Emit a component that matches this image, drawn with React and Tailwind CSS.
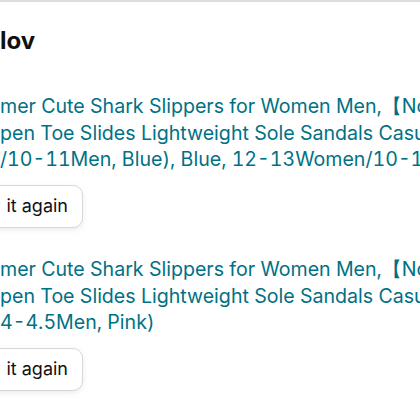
function Title({ lines }) {
  return (
    <div className="text-[#007185] text-[19.6px] leading-[26.67px] tabular-nums font-['Inter',sans-serif]">
      {lines.map((l, i) => (
        <div key={i} className="whitespace-nowrap">
          {l}
        </div>
      ))}
    </div>
  );
}

function BuyAgain() {
  return (
    <div className="mt-[12px] flex">
      <button className="-ml-[60px] flex h-[43px] w-[143px] items-center justify-end rounded-[10px] border border-[#d5d9d9] bg-white pr-[14px] pb-[2px] text-[18px] leading-[24px] text-[#0f1111] font-['Inter',sans-serif] shadow-[0_2px_5px_0_rgba(213,217,217,0.5)] whitespace-nowrap">
        <span className="mr-[6px]">Buy</span>
        <span>it again</span>
      </button>
    </div>
  );
}

export default function App() {
  return (
    <div className="w-[420px] h-[420px] overflow-hidden bg-white">
      <div className="border-t-2 border-[#dcdede]">
        <h2 className="mt-[23px] text-[24px] leading-[32px] font-bold text-[#0f1111] font-['Inter',sans-serif] whitespace-nowrap">
          lov
        </h2>
        <div className="mt-[36px] flex flex-col">
          <div>
            <Title
              lines={[
                'mer Cute Shark Slippers for Women Men,【Non-Slip】',
                'pen Toe Slides Lightweight Sole Sandals Casual Shower Shoes',
                '/10-11Men, Blue), Blue, 12-13Women/10-11Men',
              ]}
            />
            <BuyAgain />
          </div>
          <div className="mt-[28px]">
            <Title
              lines={[
                'mer Cute Shark Slippers for Women Men,【Non-Slip】',
                'pen Toe Slides Lightweight Sole Sandals Casual Shower Shoes',
                '4-4.5Men, Pink)',
              ]}
            />
            <BuyAgain />
          </div>
        </div>
      </div>
    </div>
  );
}
